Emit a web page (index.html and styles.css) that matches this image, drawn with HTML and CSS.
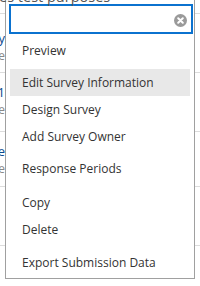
FILE: index.html
```html
<!DOCTYPE html>
<html lang="en">
<head>
    <meta charset="UTF-8" />
    <meta name="viewport" content="width=device-width, initial-scale=1.0" />
    <title>Survey actions</title>
    <link rel="stylesheet" href="styles.css">
</head>
<body>
    <div class="page">
        <div class="intro"><span class="intro-text">es test purposes</span></div>
        <div class="row">
            <div class="cell"><span class="title">Survey</span></div>
            <div class="cell"><span class="meta">Le</span></div>
        </div>
        <div class="row row-2">
            <div class="cell"><span class="title">Survey 1</span></div>
            <div class="cell"><span class="meta">Le</span></div>
        </div>
        <div class="row row-3">
            <div class="cell"><span class="title">Practice</span></div>
            <div class="cell"><span class="meta">Site</span></div>
        </div>
        <div class="row"></div>
    </div>

    <div class="dropdown">
        <div class="search">
            <input type="text" class="search-input">
            <span class="clear">
                <svg width="13" height="13" viewBox="0 0 13 13">
                    <circle cx="6.5" cy="6.5" r="6.5" fill="#9a9a9a"/>
                    <path d="M4.2 4.2 L8.8 8.8 M8.8 4.2 L4.2 8.8" stroke="#fff" stroke-width="2" stroke-linecap="round"/>
                </svg>
            </span>
        </div>
        <ul class="group first">
            <li>Preview</li>
        </ul>
        <ul class="group g2">
            <li class="active">Edit Survey Information</li>
            <li>Design Survey</li>
            <li>Add Survey Owner</li>
        </ul>
        <ul class="group g3">
            <li>Response Periods</li>
        </ul>
        <ul class="group g4">
            <li>Copy</li>
            <li>Delete</li>
        </ul>
        <ul class="group g5">
            <li>Export Submission Data</li>
        </ul>
    </div>
</body>
</html>
```

FILE: styles.css
```css
html, body {
    margin: 0;
    padding: 0;
}
body {
    font-family: "Open Sans", "Segoe UI", sans-serif;
    color: #333;
    background: #fff;
    position: relative;
    height: 286px;
    overflow: hidden;
}
.page {
    width: 200px;
}
.intro {
    height: 13px;
    border-bottom: 1px solid #dcdcdc;
    margin-top: -6px;
    padding-top: 6px;
}
.intro-text {
    position: relative;
    z-index: 5;
    display: block;
    margin-top: -12px;
    margin-left: -1px;
    font-size: 14.5px;
    line-height: 18px;
    color: #555;
    white-space: nowrap;
}
.row {
    height: 59px;
    border-bottom: 1px solid #dcdcdc;
    padding-top: 15px;
    box-sizing: border-box;
}
.row-2 {
    padding-top: 10px;
}
.row-3 {
    height: 55px;
    padding-top: 10px;
}
.cell {
    width: 5px;
    display: flex;
    justify-content: flex-end;
    white-space: nowrap;
    overflow: hidden;
    font-size: 13px;
    line-height: 18px;
}
.cell .title {
    color: #0b4a8f;
}
.cell .meta {
    color: #888;
    font-size: 12px;
}
.dropdown {
    position: absolute;
    left: 5px;
    top: -1px;
    width: 188px;
    background: #fff;
    border: 1px solid #a0a0a0;
    padding: 0 0 2px 0;
}
.search {
    position: relative;
    padding: 4px 0 0 3px;
}
.search-input {
    display: block;
    width: 184px;
    height: 30px;
    box-sizing: border-box;
    border: 2px solid #0b72cf;
    margin: 0;
    padding: 0 20px 0 4px;
    outline: none;
    font-family: inherit;
}
.clear {
    position: absolute;
    right: 7px;
    top: 14px;
    width: 13px;
    height: 13px;
}
.clear svg {
    display: block;
}
.group {
    list-style: none;
    margin: 5px 0 0 0;
    padding: 0;
}
.group.first {
    margin-top: 3px;
}
.group.g4 {
    margin-top: 7px;
}
.group.g5 {
    margin-top: 6px;
}
.group li {
    margin: 0 4px;
    height: 27px;
    line-height: 27px;
    padding-left: 12px;
    font-size: 12px;
    color: #333;
    white-space: nowrap;
}
.group li.active {
    background: #e8e8e8;
}
```
